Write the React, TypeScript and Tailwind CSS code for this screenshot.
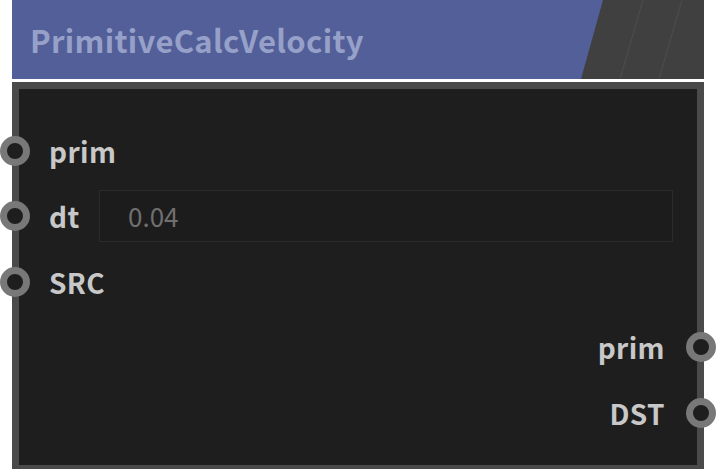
const font = { fontFamily: '"Noto Sans CJK SC", "Noto Sans", sans-serif' };

const Pin = ({ side }: { side: 'left' | 'right' }) => (
  <span
    className={`absolute top-1/2 -translate-y-1/2 w-[30px] h-[30px] rounded-full border-[7px] border-[#787878] bg-[#1e1e1e] ${
      side === 'left' ? 'left-[-19px]' : 'right-[-19px]'
    }`}
  />
);

const InRow = ({ label, children }: { label: string; children?: React.ReactNode }) => (
  <div className="relative h-[65.5px] flex items-center pl-[30px] pr-[24px]">
    <Pin side="left" />
    <span className="text-[28px] font-bold text-[#c8c8c8] w-[50px] leading-none tracking-[0.4px]">{label}</span>
    {children}
  </div>
);

const OutRow = ({ label }: { label: string }) => (
  <div className="relative h-[65.5px] flex items-center justify-end pr-[32px]">
    <span className="text-[28px] font-bold text-[#c8c8c8] leading-none tracking-[0.4px]">{label}</span>
    <Pin side="right" />
  </div>
);

export default function App() {
  return (
    <div className="min-h-screen bg-white pl-[12px] w-[717px] h-[469px] overflow-hidden" style={font}>
      <div className="flex w-[692px] h-[79px]">
        <div className="flex-1 bg-[#525f98] flex items-center pl-[18px]">
          <span className="text-[31px] font-bold text-[#97a0c8] leading-none tracking-[0.3px]">PrimitiveCalcVelocity</span>
        </div>
        <svg width="123" height="79" viewBox="0 0 123 79" className="block">
          <rect width="123" height="79" fill="#404040" />
          <polygon points="0,0 22,0 0,79" fill="#525f98" />
          <line x1="39" y1="79" x2="62" y2="0" stroke="#4b4b4b" strokeWidth="1.2" />
          <line x1="78" y1="79" x2="101" y2="0" stroke="#4b4b4b" strokeWidth="1.2" />
        </svg>
      </div>
      <div className="mt-[3px] w-[692px] h-[390px] border-[7px] border-[#4a4a4a] bg-[#1e1e1e] pt-[29px]">
        <InRow label="prim" />
        <InRow label="dt">
          <div className="flex-1 h-[52px] border border-[#2b2b2b] bg-[#1c1c1c] flex items-center pl-[28px]">
            <span className="text-[26px] text-[#6f6f6f] leading-none">0.04</span>
          </div>
        </InRow>
        <InRow label="SRC" />
        <OutRow label="prim" />
        <OutRow label="DST" />
      </div>
    </div>
  );
}
